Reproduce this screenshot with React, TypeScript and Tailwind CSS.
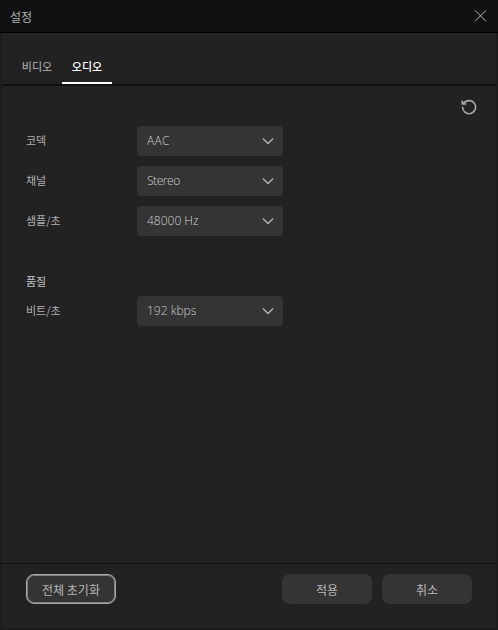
import React from "react";

function Chevron() {
  return (
    <svg width="12" height="8" viewBox="0 0 12 8" fill="none" stroke="#b4b4b4" strokeWidth="1.4">
      <path d="M0.9 1.6 L6 6.6 L11.1 1.6" />
    </svg>
  );
}

function Field({ label, value, tracking = "" }: { label: string; value: string; tracking?: string }) {
  return (
    <div className="flex h-[30px] items-center">
      <span className="w-[111px] pb-px text-[11px] leading-[29px] whitespace-nowrap text-[#b0b0b0]">{label}</span>
      <button className="flex h-[30px] w-[146px] items-center justify-between rounded-[4px] bg-[#343434] pr-[9px] pl-[10px]">
        <span className={`pb-px font-['Open_Sans','Noto_Sans',sans-serif] text-[12px] leading-[18px] font-light text-[#d0d0d0] ${tracking}`}>
          {value}
        </span>
        <Chevron />
      </button>
    </div>
  );
}

export default function App() {
  return (
    <div className="flex h-[630px] w-[498px] flex-col bg-[#1c1c1c] font-['Noto_Sans_CJK_KR',sans-serif]">
      <header className="flex h-[33px] shrink-0 items-center justify-between border-b border-black bg-[#111111] pr-[11px] pl-[10px]">
        <h1 className="pt-px text-[12px] leading-[18px] text-[#b0b0b0]">설정</h1>
        <svg width="13" height="12" viewBox="0 0 13 12" stroke="#c8c8c8" strokeWidth="0.9">
          <path d="M1 0.3 L12 11.3 M12 0.3 L1 11.3" />
        </svg>
      </header>
      <div className="mx-[2px] mb-[2px] flex flex-1 flex-col bg-[#222222]">
        <nav className="flex h-[53px] items-end border-b-2 border-[#111111] pl-[10px] text-[11px]">
          <button className="h-[35px] w-[50px] border-b-2 border-transparent pt-[2px] text-[#b8b8b8]">비디오</button>
          <button className="h-[35px] w-[50px] border-b-2 border-white pt-[2px] font-medium text-white">오디오</button>
        </nav>
        <main className="flex flex-1 flex-col pl-6">
          <div className="flex h-[40px] justify-end pt-[13px] pr-[19px]">
            <svg width="16" height="16" viewBox="0 0 16 16" fill="none" stroke="#a8a8a8" strokeWidth="1.6">
              <path d="M2.7 4.5 A6.5 6.5 0 1 1 1.6 7.6" />
              <path d="M1.3 1.4 V5 H5.2" />
              <path d="M1.8 3.4 L3.4 4.8" />
            </svg>
          </div>
          <div className="flex flex-col gap-[10px]">
            <Field label="코덱" value="AAC" tracking="tracking-[0.3px]" />
            <Field label="채널" value="Stereo" tracking="tracking-[-0.45px]" />
            <Field label="샘플/초" value="48000 Hz" />
          </div>
          <h2 className="mt-[30px] h-[30px] text-[11px] leading-[30px] font-medium text-[#b0b0b0]">품질</h2>
          <Field label="비트/초" value="192 kbps" />
        </main>
        <footer className="flex h-[65px] gap-[10px] border-t border-[#111111] px-6 pt-[10px] text-[12px] text-[#b8b8b8]">
          <button className="mr-auto h-[30px] w-[90px] rounded-[8px] border border-[#a8a8a8] bg-[#343434] pt-[2px] inset-ring inset-ring-[#808080]">
            전체 초기화
          </button>
          <button className="h-[30px] w-[90px] rounded-[8px] bg-[#343434] pt-[2px]">적용</button>
          <button className="h-[30px] w-[90px] rounded-[8px] bg-[#343434] pt-[2px]">취소</button>
        </footer>
      </div>
    </div>
  );
}
